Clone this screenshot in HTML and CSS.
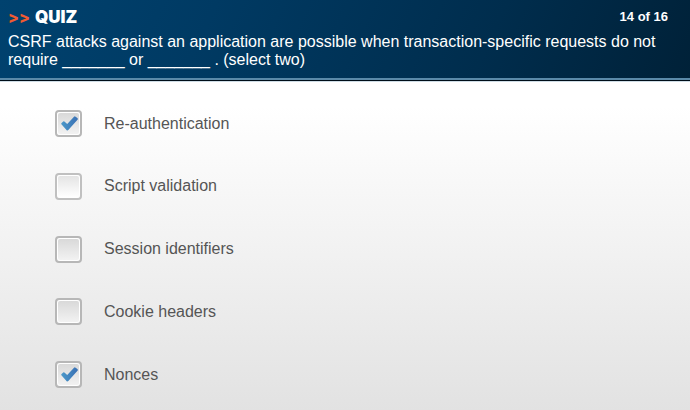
FILE: index.html
```html
<!DOCTYPE html>
<html lang="en">
<head>
<meta charset="utf-8">
<title>Quiz</title>
<meta name="viewport" content="width=device-width, initial-scale=1">
<link rel="stylesheet" href="styles.css">
</head>
<body>
<header class="header">
  <div class="topline">
    <h1 class="title"><span class="arrows">&gt;&gt;</span><span>QUIZ</span></h1>
    <span class="progress">14 of 16</span>
  </div>
  <p class="question" id="question">CSRF attacks against an application are possible when transaction-specific requests do not require _______ or _______ . (select two)</p>
</header>
<main class="answers" role="group" aria-labelledby="question">
  <label class="answer">
    <span class="box"><input type="checkbox" checked><svg class="tick" viewBox="0 0 17 15" aria-hidden="true"><use href="#tick"/></svg></span>
    <span>Re-authentication</span>
  </label>
  <label class="answer">
    <span class="box box-light"><input type="checkbox"><svg class="tick" viewBox="0 0 17 15" aria-hidden="true"><use href="#tick"/></svg></span>
    <span>Script validation</span>
  </label>
  <label class="answer">
    <span class="box"><input type="checkbox"><svg class="tick" viewBox="0 0 17 15" aria-hidden="true"><use href="#tick"/></svg></span>
    <span>Session identifiers</span>
  </label>
  <label class="answer">
    <span class="box"><input type="checkbox"><svg class="tick" viewBox="0 0 17 15" aria-hidden="true"><use href="#tick"/></svg></span>
    <span>Cookie headers</span>
  </label>
  <label class="answer">
    <span class="box"><input type="checkbox" checked><svg class="tick" viewBox="0 0 17 15" aria-hidden="true"><use href="#tick"/></svg></span>
    <span>Nonces</span>
  </label>
</main>
<svg class="defs" width="0" height="0" aria-hidden="true">
  <defs>
    <linearGradient id="tick-fill" x1="0" y1="0" x2="1" y2="0">
      <stop offset="0" stop-color="#4a98c9"/>
      <stop offset="1" stop-color="#3a70b4"/>
    </linearGradient>
    <path id="tick" fill="url(#tick-fill)" d="M0.4 8.2 Q0 7.6 0.6 7 L2.2 5.6 Q3 5 3.7 5.7 L6.2 8 L13 0.7 Q13.8 0 14.6 0.7 L16.4 2 Q17.2 2.8 16.5 3.8 L7.3 14.1 Q6.3 15 5.5 14 Z"/>
  </defs>
</svg>
</body>
</html>
```
FILE: styles.css
```css
* {
  box-sizing: border-box;
}

body {
  margin: 0;
  min-height: 100vh;
  display: flex;
  flex-direction: column;
  font: 16px/18px "Liberation Sans", Arial, sans-serif;
  color: #555;
}

.header {
  padding: 8px 8px 9px;
  color: #fff;
  background: linear-gradient(115deg, #00426f 0%, #003a63 30%, #002d4d 70%, #002138 100%);
  border-bottom: 2px solid #5b8aa9;
  box-shadow: 0 1px 0 #000d18, 0 2px 0 #cfdde6;
  position: relative;
}

.topline {
  display: flex;
  justify-content: space-between;
  align-items: center;
  padding-right: 14px;
  margin-bottom: 7px;
}

.title {
  display: flex;
  gap: 5px;
  margin: 0;
  font: 900 17px/18px Inter, sans-serif;
}

.arrows {
  color: #f15a31;
  font-size: 16px;
  font-weight: 800;
}

.progress {
  font-size: 13px;
  font-weight: 700;
}

.question {
  margin: 0;
}

.answers {
  flex: 1;
  display: flex;
  flex-direction: column;
  justify-content: space-between;
  padding: 30px 55px 22px;
  background: linear-gradient(#fff 0%, #fff 8%, #f2f2f2 50%, #e2e2e2 100%);
}

.answer {
  display: flex;
  align-items: center;
  gap: 22px;
  cursor: pointer;
}

.box {
  display: grid;
  place-items: center;
  width: 27px;
  height: 27px;
  border: 2px solid #b7b7b7;
  border-radius: 4px;
}

.box > * {
  grid-area: 1 / 1;
}

.box input {
  appearance: none;
  margin: 0;
  width: 23px;
  height: 23px;
  border: 1px solid #fff;
  border-radius: 3px;
  background: linear-gradient(#d9d9d9, #f2f2f2);
}

.box-light {
  border-color: #c0c0c0;
}

.box-light input {
  background: linear-gradient(#e4e4e4, #fff);
}

.tick {
  width: 17px;
  height: 15px;
  margin-left: 1px;
  visibility: hidden;
  pointer-events: none;
}

input:checked + .tick {
  visibility: visible;
}

.defs {
  position: absolute;
}
```
